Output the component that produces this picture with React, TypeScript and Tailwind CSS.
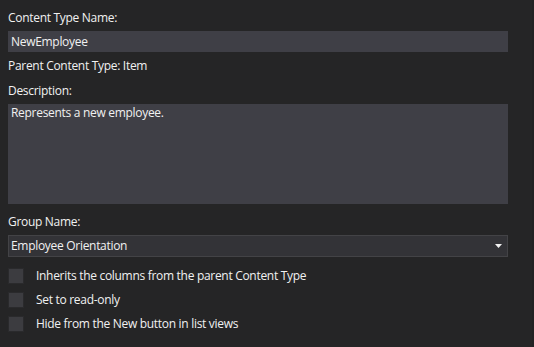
import React from 'react';

const font = { fontFamily: '"Open Sans", "Noto Sans", sans-serif' };

const Check: React.FC<{ label: string }> = ({ label }) => (
  <div className="flex h-[24px] items-center">
    <span className="block h-[16px] w-[16px] border border-[#2a2a2c] bg-[#3c3c40]" />
    <span className="ml-[12px]">{label}</span>
  </div>
);

export default function App() {
  return (
    <div style={font} className="h-[347px] w-[534px] overflow-hidden border-r-2 border-[#222223] bg-[#252526] pl-[8px] pt-[10px] text-[12px] leading-[16px] tracking-[-0.3px] text-[#f1f1f1]">
      <div className="w-[500px]">
        {/* Content type name */}
        <div className="h-[21px]">Content Type Name:</div>
        <div className="flex h-[21px] items-center bg-[#3f3f46] px-[3px]">NewEmployee</div>

        <div className="mt-[6px] h-[20px]">Parent Content Type: Item</div>

        {/* Description */}
        <div className="mt-[5px] h-[21px]">Description:</div>
        <div className="h-[100px] bg-[#3f3f46] px-[3px] pt-[1px]">Represents a new employee.</div>

        {/* Group */}
        <div className="mt-[10px] h-[21px]">Group Name:</div>
        <div className="relative flex h-[22px] items-center border border-[#434346] bg-[#333337] px-[2px]">
          Employee Orientation
          <svg className="absolute right-[5px] top-[8px]" width="7" height="4" viewBox="0 0 7 4">
            <path d="M0 0h7L3.5 4z" fill="#f1f1f1" />
          </svg>
        </div>

        <div className="mt-[7px]">
          <Check label="Inherits the columns from the parent Content Type" />
          <Check label="Set to read-only" />
          <Check label="Hide from the New button in list views" />
        </div>
      </div>
    </div>
  );
}
